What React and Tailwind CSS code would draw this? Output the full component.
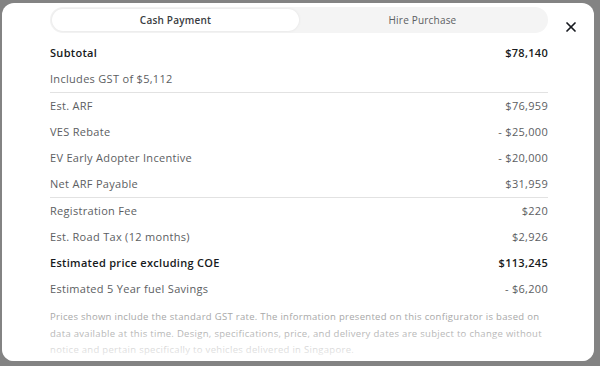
import { X } from 'lucide-react';

const rows = [
  { label: 'Subtotal', value: '$78,140', bold: true },
  { label: 'Includes GST of $5,112', value: '', border: true },
  { label: 'Est. ARF', value: '$76,959' },
  { label: 'VES Rebate', value: '- $25,000' },
  { label: 'EV Early Adopter Incentive', value: '- $20,000' },
  { label: 'Net ARF Payable', value: '$31,959', border: true },
  { label: 'Registration Fee', value: '$220' },
  { label: 'Est. Road Tax (12 months)', value: '$2,926' },
  { label: 'Estimated price excluding COE', value: '$113,245', bold: true },
  { label: 'Estimated 5 Year fuel Savings', value: '- $6,200' },
];

export default function App() {
  return (
    <div
      className="w-[600px] h-[366px] bg-[#838383] pt-[3px] pl-[2px] pr-[6px] pb-[5px]"
      style={{ fontFamily: '"Open Sans", "Liberation Sans", sans-serif' }}
    >
      <div className="relative h-full bg-white rounded-[12px] overflow-hidden pt-[4px] pl-[48px] pr-[46px]">
        <div className="flex items-center">
          <div className="w-[498px] h-[26px] bg-[#f4f4f4] rounded-full p-[2px] flex">
            <div className="flex-1 bg-white rounded-full shadow-[0_0_3px_rgba(0,0,0,0.08)] flex items-center justify-center text-[10px] font-semibold tracking-[0.2px] text-[#393c41]">
              Cash Payment
            </div>
            <div className="flex-1 flex items-center justify-center text-[10px] font-medium tracking-[0.2px] text-[#5c5e62]">
              Hire Purchase
            </div>
          </div>
        </div>
        <button className="absolute right-[15px] top-[16px] text-[#171a20]">
          <X size={16} strokeWidth={2.6} />
        </button>

        <div className="mt-[7px]">
          {rows.map(r => (
            <div
              key={r.label}
              className={`h-[26px] flex items-center justify-between text-[11px] tracking-[0.3px] ${r.border ? 'border-b border-[#e2e2e2] h-[27px]' : ''} ${r.bold ? 'font-semibold text-[#171a20]' : 'text-[#5c5e62]'}`}
            >
              <span>{r.label}</span>
              <span>{r.value}</span>
            </div>
          ))}
        </div>

        <p className="mt-[7px] text-[9.5px] leading-[16.5px] tracking-[0.3px] text-[#a8a8a8]">
          Prices shown include the standard GST rate. The information presented on this configurator is based on data available at this time. Design, specifications, price, and delivery dates are subject to change without notice and pertain specifically to vehicles delivered in Singapore.
        </p>
        <div className="absolute left-0 right-0 bottom-0 h-[34px] bg-gradient-to-b from-white/0 to-white/90" />
      </div>
    </div>
  );
}
